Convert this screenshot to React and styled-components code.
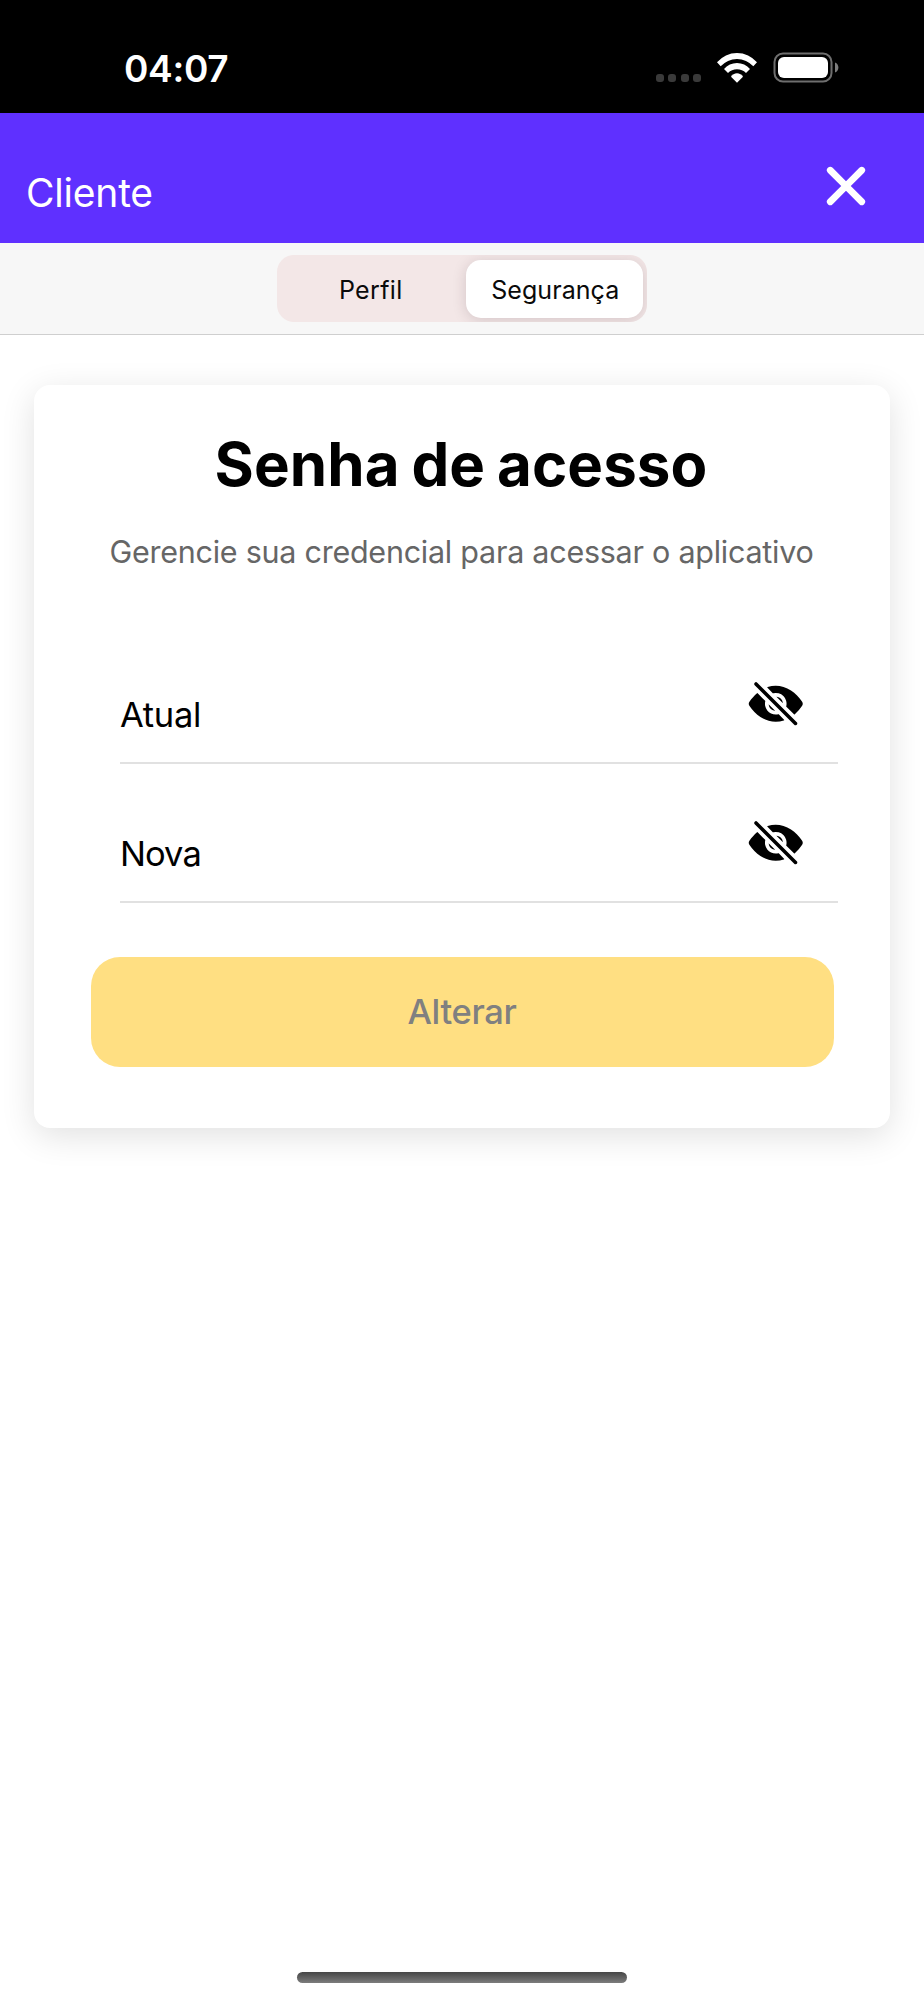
import { useState } from "react";
import styled, { createGlobalStyle } from "styled-components";
import { IoClose, IoEyeOff, IoEye } from "react-icons/io5";

const GlobalStyle = createGlobalStyle`
  * {
    box-sizing: border-box;
  }
  body {
    margin: 0;
    background: #ffffff;
    font-family: Inter, "Liberation Sans", sans-serif;
  }
`;

const StyledScreen = styled.div`
  width: 924px;
  height: 2000px;
  margin: auto;
  display: flex;
  flex-direction: column;
  background: #ffffff;
  overflow: hidden;
`;

const StyledStatusBar = styled.div`
  height: 113px;
  padding: 46px 85px 0 124px;
  display: flex;
  justify-content: space-between;
  align-items: flex-start;
  background: #000000;
`;

const StyledTime = styled.span`
  font-size: 37px;
  font-weight: 580;
  line-height: 45px;
  letter-spacing: -0.3px;
  color: #ffffff;
`;

const StyledStatusIcons = styled.div`
  display: flex;
  align-items: flex-end;
  height: 37px;
`;

const StyledDots = styled.div`
  display: flex;
  gap: 4.5px;
  margin: 0 16px 1px 0;
`;

const StyledDot = styled.span`
  width: 8px;
  height: 8px;
  border-radius: 3px;
  background: #3a3a3a;
`;

const StyledWifi = styled.svg`
  width: 40px;
  height: 30px;
  margin-right: 16px;
`;

const StyledBattery = styled.svg`
  width: 66px;
  height: 31px;
`;

const StyledHeader = styled.header`
  height: 130px;
  padding: 37px 42px 0 26px;
  display: flex;
  justify-content: space-between;
  align-items: flex-start;
  background: #5f30ff;
`;

const StyledHeaderTitle = styled.span`
  margin-top: 19px;
  font-size: 39px;
  font-weight: 430;
  line-height: 48px;
  letter-spacing: -0.2px;
  color: #ffffff;
`;

const StyledIconButton = styled.button`
  display: flex;
  padding: 0;
  border: none;
  background: none;
  color: ${(props) => props.$color};
  font-size: ${(props) => props.$size}px;
`;

const StyledTabBar = styled.nav`
  height: 92px;
  padding-top: 12px;
  display: flex;
  justify-content: center;
  align-items: flex-start;
  background: #f7f7f7;
  border-bottom: 1px solid #cfcfcf;
`;

const StyledSegment = styled.div`
  width: 370px;
  height: 67px;
  padding: 4.5px 4.5px 4px 4.5px;
  display: flex;
  border-radius: 17px;
  background: #f3e7e7;
  overflow: hidden;
`;

const StyledTab = styled.button`
  flex: ${(props) => (props.$active ? "0 0 176.5px" : "1")};
  padding: ${(props) => (props.$active ? "2px 0 0 2px" : "2px 6px 0 0")};
  border: none;
  border-radius: 15px;
  background: ${(props) => (props.$active ? "#ffffff" : "transparent")};
  box-shadow: ${(props) =>
    props.$active ? "0 2px 14px rgba(60, 30, 40, 0.17)" : "none"};
  font-family: inherit;
  font-size: 25px;
  letter-spacing: ${(props) => (props.$active ? "0.05px" : "0.35px")};
  color: #0a0a0a;
`;

const StyledCard = styled.section`
  width: 856px;
  height: 742.5px;
  margin: 50px auto 0;
  padding-top: 43px;
  display: flex;
  flex-direction: column;
  border-radius: 16px;
  background: #ffffff;
  box-shadow: 0 8px 34px rgba(0, 0, 0, 0.12);
`;

const StyledTitle = styled.h1`
  margin: 0;
  padding-right: 2px;
  font-size: 60px;
  font-weight: 700;
  line-height: 72px;
  letter-spacing: 0.1px;
  word-spacing: -2.5px;
  text-align: center;
  color: #000000;
`;

const StyledSubtitle = styled.p`
  margin: 32px 0 53px;
  padding-right: 1px;
  font-size: 30.5px;
  line-height: 40px;
  letter-spacing: -0.25px;
  text-align: center;
  color: #666666;
`;

const StyledField = styled.div`
  height: 139px;
  margin: 0 52px 0 86px;
  padding: 50px 34px 0 0;
  display: flex;
  justify-content: space-between;
  align-items: flex-start;
  border-bottom: 2px solid #e1e1e1;
`;

const StyledLabel = styled.label`
  margin-top: 18px;
  font-size: 34.5px;
  line-height: 44px;
  letter-spacing: ${(props) => props.$spacing}px;
  color: #000000;
`;

const StyledSubmit = styled.button`
  width: 743px;
  height: 110px;
  margin: 54px auto 0;
  padding: 0 0 2px;
  border: none;
  border-radius: 29px;
  background: #ffdf82;
  font-family: inherit;
  font-size: 34.5px;
  font-weight: 500;
  letter-spacing: -0.35px;
  color: #808080;
`;

const StyledHomeIndicator = styled.div`
  width: 330px;
  height: 11px;
  margin: auto auto 17px;
  border-radius: 6px;
  background: linear-gradient(#464646, #7c7c7c);
`;

const tabs = ["Perfil", "Segurança"];

const PasswordField = ({ label, spacing }) => {
  const [visible, setVisible] = useState(false);

  return (
    <StyledField>
      <StyledLabel $spacing={spacing}>{label}</StyledLabel>
      <StyledIconButton
        $size={57.5}
        $color="#000000"
        onClick={() => setVisible(!visible)}
      >
        {visible ? <IoEye /> : <IoEyeOff />}
      </StyledIconButton>
    </StyledField>
  );
};

const App = () => {
  const [tab, setTab] = useState("Segurança");

  return (
    <>
      <GlobalStyle />
      <StyledScreen>
        <StyledStatusBar>
          <StyledTime>04:07</StyledTime>
          <StyledStatusIcons>
            <StyledDots>
              <StyledDot />
              <StyledDot />
              <StyledDot />
              <StyledDot />
            </StyledDots>
            <StyledWifi viewBox="0 0 120 90" fill="#ffffff">
              <path d="M0 28A78.3 78.3 0 0 1 120 28L109 40A65.6 65.6 0 0 0 11 40Z" />
              <path d="M21 48A51 51 0 0 1 99 48L87 60A38.6 38.6 0 0 0 33 60Z" />
              <path d="M42 71A21.2 21.2 0 0 1 78 71L60 89Z" />
            </StyledWifi>
            <StyledBattery viewBox="0 0 66 31">
              <rect
                x="1.5"
                y="1.5"
                width="57"
                height="28"
                rx="8.5"
                fill="none"
                stroke="#6e6e6e"
                strokeWidth="2"
              />
              <rect x="5" y="5" width="50" height="21" rx="6" fill="#ffffff" />
              <path d="M62 10.5C66.5 12 66.5 19 62 20.5Z" fill="#7d7d7d" />
            </StyledBattery>
          </StyledStatusIcons>
        </StyledStatusBar>
        <StyledHeader>
          <StyledHeaderTitle>Cliente</StyledHeaderTitle>
          <StyledIconButton $size={72} $color="#ffffff">
            <IoClose />
          </StyledIconButton>
        </StyledHeader>
        <StyledTabBar>
          <StyledSegment>
            {tabs.map((e) => (
              <StyledTab key={e} $active={e === tab} onClick={() => setTab(e)}>
                {e}
              </StyledTab>
            ))}
          </StyledSegment>
        </StyledTabBar>
        <StyledCard>
          <StyledTitle>Senha de acesso</StyledTitle>
          <StyledSubtitle>
            Gerencie sua credencial para acessar o aplicativo
          </StyledSubtitle>
          <PasswordField label="Atual" spacing={-0.3} />
          <PasswordField label="Nova" spacing={-0.95} />
          <StyledSubmit>Alterar</StyledSubmit>
        </StyledCard>
        <StyledHomeIndicator />
      </StyledScreen>
    </>
  );
};

export default App;
